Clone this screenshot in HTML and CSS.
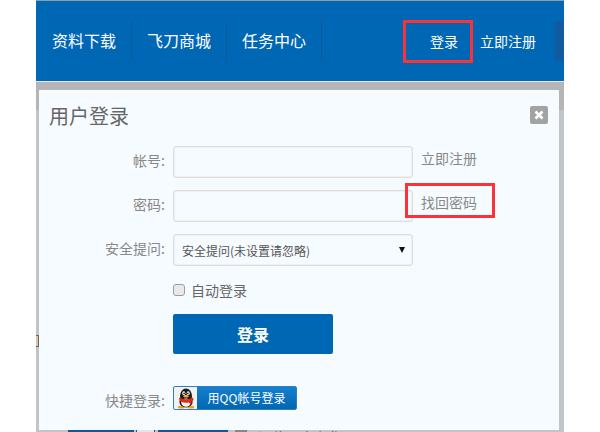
FILE: index.html
```html
<!DOCTYPE html>
<html lang="zh">
<head>
<meta charset="utf-8">
<title>用户登录</title>
<link rel="stylesheet" href="styles.css">
</head>
<body>
<div class="page">
  <header class="header">
    <nav class="nav">
      <a class="nav-item">资料下载</a>
      <a class="nav-item">飞刀商城</a>
      <a class="nav-item">任务中心</a>
    </nav>
    <div class="user">
      <a class="user-login">登录<span class="mark mark-top"></span></a>
      <a class="user-reg">立即注册</a>
      <span class="user-block"></span>
    </div>
  </header>
  <div class="overlay">
    <span class="peek"></span>
    <section class="modal">
      <div class="modal-head">
        <h1 class="modal-title">用户登录</h1>
        <span class="close">
          <svg width="10" height="10" viewBox="0 0 10 10"><path d="M1.500 1.500l7 7M8.500 1.500l-7 7" stroke="#fff" stroke-width="2.600" fill="none"/></svg>
        </span>
      </div>
      <div class="row">
        <label class="label">帐号:</label>
        <div class="field"></div>
        <a class="side">立即注册</a>
      </div>
      <div class="row">
        <label class="label">密码:</label>
        <div class="field"></div>
        <a class="side">找回密码<span class="mark mark-side"></span></a>
      </div>
      <div class="row">
        <label class="label">安全提问:</label>
        <div class="field select">
          <span>安全提问(未设置请忽略)</span>
          <svg class="caret" width="6" height="6" viewBox="0 0 6 6"><path d="M0 0h6L3 6z" fill="#111"/></svg>
        </div>
      </div>
      <div class="row-check">
        <span class="check"></span>
        <span class="check-label">自动登录</span>
      </div>
      <div class="row-submit">
        <button class="submit">登录</button>
      </div>
      <div class="row-quick">
        <label class="label">快捷登录:</label>
        <a class="qq">
          <span class="qq-icon">
            <svg width="18" height="21" viewBox="0 0 18 21">
              <ellipse cx="4.200" cy="19" rx="3.400" ry="1.600" fill="#f0a020"/>
              <ellipse cx="13.800" cy="19" rx="3.400" ry="1.600" fill="#f0a020"/>
              <ellipse cx="9" cy="8" rx="6" ry="7.600" fill="#1a1a1a"/>
              <ellipse cx="9" cy="14" rx="6.600" ry="5.400" fill="#1a1a1a"/>
              <ellipse cx="9" cy="14.600" rx="4.800" ry="4.200" fill="#f6f6f6"/>
              <path d="M2 9.600c4 2.200 10 2.200 14 0l.6 2.600-2 1-.2 3.600-2.600-2.400c-2 .5-4.800 .5-6.800-.1L2.400 12.400z" fill="#e02a1c"/>
              <ellipse cx="6.800" cy="5.200" rx="1.500" ry="1.900" fill="#fff"/>
              <ellipse cx="11.200" cy="5.200" rx="1.500" ry="1.900" fill="#fff"/>
              <circle cx="7.100" cy="5.400" r=".8" fill="#111"/>
              <circle cx="10.900" cy="5.400" r=".8" fill="#111"/>
              <ellipse cx="9" cy="8.200" rx="2.800" ry="1.200" fill="#f5b52a"/>
            </svg>
          </span>
          <span class="qq-text">用QQ帐号登录</span>
        </a>
      </div>
    </section>
    <div class="under">
      <span class="under-a"></span>
      <span class="under-b"></span>
      <span class="under-c"></span>
      <span class="under-check"></span>
      <span class="under-text">记住用户名称</span>
    </div>
  </div>
</div>
</body>
</html>
```
FILE: styles.css
```css
html, body {
  margin: 0;
  padding: 0;
  height: 432px;
  overflow: hidden;
  background: #fff;
}
body {
  font-family: "Noto Sans CJK SC", "Liberation Sans", sans-serif;
}
.page {
  width: 528px;
  height: 432px;
  margin-left: 36px;
  display: flex;
  flex-direction: column;
  overflow: hidden;
}
.header {
  height: 80px;
  flex: none;
  border-top: 1px solid #9a9a9a;
  border-bottom: 1px solid #e6e6e6;
  background: #0067b5;
  display: flex;
  align-items: center;
  justify-content: space-between;
  color: #fff;
}
.nav {
  display: flex;
  margin-left: 1px;
}
.nav-item {
  height: 40px;
  line-height: 39px;
  padding: 0 15px;
  border-right: 1px solid #0c5a9c;
  font-size: 16px;
  white-space: nowrap;
}
.user {
  display: flex;
  align-items: center;
  font-size: 14px;
}
.user-login {
  position: relative;
  margin-right: 22px;
}
.user-reg {
  margin-right: 19px;
}
.user-block {
  width: 9px;
  height: 40px;
  background: #125a9e;
  border-radius: 3px 0 0 3px;
}
.mark {
  position: absolute;
  border: 3px solid #fb3338;
  box-sizing: border-box;
}
.mark-top {
  left: -27px;
  top: -11px;
  width: 70px;
  height: 43px;
}
.mark-side {
  left: -16px;
  top: -9px;
  width: 90px;
  height: 35px;
}
.overlay {
  position: relative;
  flex: 1;
  min-height: 0;
  background: linear-gradient(#b5b5b5 0, #b5b5b5 28px, #c1c5c7 28px);
  padding: 8px 5px 0 3px;
  display: flex;
  flex-direction: column;
}
.peek {
  position: absolute;
  left: 0;
  top: 253px;
  width: 2px;
  height: 10px;
  background: #d8c79a;
  border: 1px solid #666;
  border-left: 0;
}
.modal {
  height: 340px;
  flex: none;
  box-sizing: border-box;
  background: #f6fbff;
  padding: 0 11px 0 10px;
  color: #888;
  font-size: 14px;
}
.modal-head {
  height: 56px;
  display: flex;
  justify-content: space-between;
  align-items: flex-start;
}
.modal-title {
  margin: 13px 0 0;
  font-size: 20px;
  line-height: 26px;
  font-weight: 400;
  color: #666;
}
.close {
  margin-top: 16px;
  width: 18px;
  height: 18px;
  background: #a3a3a3;
  border-radius: 2px;
  display: flex;
  align-items: center;
  justify-content: center;
}
.row {
  display: flex;
  align-items: center;
  height: 32px;
  margin-bottom: 12px;
}
.row .label {
  padding-bottom: 4px;
}
.label {
  width: 116px;
  text-align: right;
  margin-right: 8px;
  flex: none;
  white-space: nowrap;
}
.field {
  width: 240px;
  height: 32px;
  box-sizing: border-box;
  border: 1px solid #dedede;
  border-radius: 3px;
  box-shadow: inset 0 0 0 .5px #e4e4e4;
  flex: none;
}
.side {
  position: relative;
  margin-left: 8px;
  padding-bottom: 8px;
  white-space: nowrap;
  color: #888;
}
.select {
  display: flex;
  align-items: center;
  justify-content: space-between;
  padding: 0 7px 0 8px;
  font-size: 12px;
  color: #555;
}
.caret {
  margin-top: -1px;
}
.row-check {
  display: flex;
  align-items: center;
  height: 20px;
  margin: 14px 0 0 124px;
  color: #666;
}
.check {
  width: 12px;
  height: 12px;
  box-sizing: border-box;
  background: #e9e9e9;
  border: 1px solid #9c9c9c;
  border-radius: 3px;
  margin-right: 6px;
}
.row-submit {
  margin: 14px 0 0 124px;
}
.submit {
  display: block;
  width: 160px;
  height: 40px;
  border: 0;
  border-radius: 2px;
  background: #0067b5;
  color: #fff;
  font: 700 16px "Noto Sans CJK SC", "Liberation Sans", sans-serif;
}
.row-quick {
  display: flex;
  align-items: center;
  height: 24px;
  margin-top: 32px;
}
.row-quick .label {
  position: relative;
  top: 2px;
}
.qq {
  display: flex;
  width: 124px;
  height: 24px;
  box-sizing: border-box;
  border: 1px solid #2e7fc0;
  border-radius: 2px;
  overflow: hidden;
  background: linear-gradient(#1480cf, #0366b0);
}
.qq-icon {
  width: 23px;
  flex: none;
  background: #f2f2f2;
  display: flex;
  align-items: center;
  justify-content: center;
}
.qq-text {
  flex: 1;
  text-align: center;
  color: #fff;
  font-size: 12px;
  line-height: 22px;
  white-space: nowrap;
}
.under {
  height: 2px;
  flex: none;
  display: flex;
  overflow: hidden;
  padding-left: 29px;
}
.under-a {
  width: 66px;
  height: 2px;
  background: #0a5a9c;
  margin-right: 2px;
}
.under-b {
  width: 17px;
  height: 2px;
  background: #dfe6ee;
  border: solid #0a5a9c;
  border-width: 0 1px;
  margin-right: 3px;
}
.under-c {
  width: 70px;
  height: 2px;
  background: #0a5a9c;
  margin-right: 7px;
}
.under-check {
  width: 12px;
  height: 2px;
  background: #888;
  margin-right: 11px;
}
.under-text {
  font-size: 14px;
  line-height: 14px;
  color: #555;
  white-space: nowrap;
  height: 14px;
}
```
